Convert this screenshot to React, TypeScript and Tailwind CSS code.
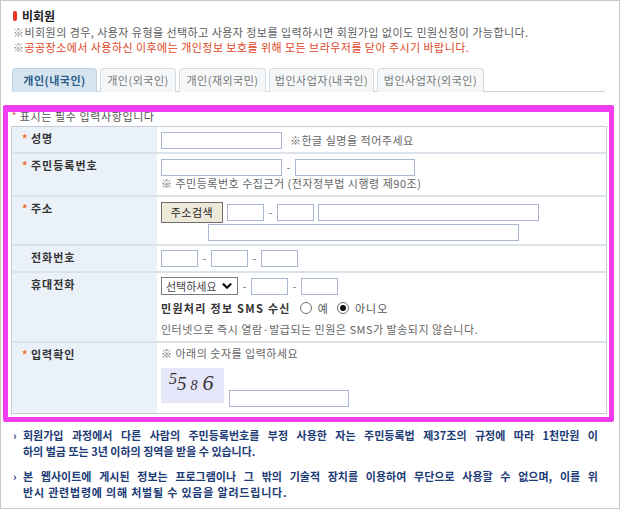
import { ChevronDown } from "lucide-react";
import type { ReactNode } from "react";

const tabs = [
  { label: "개인(내국인)", w: "w-[85px]", active: true },
  { label: "개인(외국인)", w: "w-[76px]" },
  { label: "개인(재외국민)", w: "w-[87px]" },
  { label: "법인사업자(내국인)", w: "w-[105px]" },
  { label: "법인사업자(외국인)", w: "w-[107px]" },
];

const Field = ({ w }: { w: string }) => (
  <input type="text" className={`${w} h-[17px] shrink-0 border border-[#a8b7cf] bg-white outline-none`} />
);

const Dash = () => <span className="w-[13px] shrink-0 text-center text-[11px] text-[#777]">-</span>;

function Row({ label, req, h, last, children }: { label: string; req?: boolean; h: string; last?: boolean; children: ReactNode }) {
  return (
    <div className={`flex ${h} ${last ? "" : "border-b-2 border-[#dce2e9]"}`}>
      <div className="flex w-[145px] shrink-0 items-start bg-[#eaf1f8] pl-[10px] pt-[4px] text-[11px] leading-[15px] font-bold text-[#333]">
        <span className={`w-[9px] text-[#f0702e] ${req ? "" : "invisible"}`}>*</span>
        <span className="tracking-[1px]">{label}</span>
      </div>
      <div className="flex-1 pl-[4px]">{children}</div>
    </div>
  );
}

function Radio({ on }: { on?: boolean }) {
  return (
    <span className="flex h-[12px] w-[12px] items-center justify-center rounded-full border border-[#707070] bg-white">
      {on && <span className="h-[6px] w-[6px] rounded-full bg-[#111]" />}
    </span>
  );
}

export default function App() {
  return (
    <div className="h-[509px] w-[620px] overflow-hidden border border-[#c8c8c8] bg-white font-['Noto_Sans_CJK_KR','Noto_Sans',sans-serif] text-[11px]">
      <div className="pl-[12px] pt-[7px]">
        <div className="flex items-center gap-[5px] leading-[16px]">
          <span className="h-[10px] w-[4px] rounded-full bg-[#e8331e]" />
          <span className="text-[12px] font-bold text-[#222]">비회원</span>
        </div>
        <p className="mt-[1px] leading-[15px] tracking-[0.45px] text-[#5c5c5c]">
          <span className="text-[#888]">※</span>비회원의 경우, 사용자 유형을 선택하고 사용자 정보를 입력하시면 회원가입 없이도 민원신청이 가능합니다.
        </p>
        <p className="leading-[15px] tracking-[0.45px] text-[#e0461f]">
          <span className="text-[#888]">※</span>공공장소에서 사용하신 이후에는 개인정보 보호를 위해 모든 브라우저를 닫아 주시기 바랍니다.
        </p>
      </div>

      <div className="ml-[11px] mr-[14px] mt-[13px] flex gap-[3px] border-b border-[#c9d4dd]">
        {tabs.map((t) => (
          <div
            key={t.label}
            className={`${t.w} -mb-px flex h-[24px] items-center justify-center rounded-t-[4px] border border-b-0 tracking-[0.5px] ${
              t.active ? "border-[#c3d3df] bg-[#d5e4ee] font-bold text-[#2c5f8e]" : "border-[#d3dbe2] bg-[#f5f7f9] text-[#777]"
            }`}
          >
            {t.label}
          </div>
        ))}
      </div>

      <div className="ml-[2px] mr-[5px] mt-[13px] overflow-hidden rounded-[2px] border-[5px] border-t-[7px] border-[#f03df0] pb-[3px] pl-[3px] pr-[2px]">
        <p className="mt-[-3px] flex items-center gap-[3px] pl-[1px] leading-[14px] tracking-[0.6px] text-[#555]">
          <span className="text-[9px] text-[#e33]">*</span>표시는 필수 입력사항입니다
        </p>
        <div className="mt-[3px] border border-[#c5ced7]">
          <Row label="성명" req h="h-[27px]">
            <div className="flex items-center pt-[5px]">
              <Field w="w-[121px]" />
              <span className="ml-[8px] tracking-[0.5px] text-[#666]">※한글 실명을 적어주세요</span>
            </div>
          </Row>
          <Row label="주민등록번호" req h="h-[43px]">
            <div className="flex items-center pt-[5px]">
              <Field w="w-[121px]" />
              <Dash />
              <Field w="w-[120px]" />
            </div>
            <p className="leading-[14px] tracking-[0.5px] text-[#666]">※ 주민등록번호 수집근거 (전자정부법 시행령 제90조)</p>
          </Row>
          <Row label="주소" req h="h-[49px]">
            <div className="flex items-center gap-[4px] pt-[5px]">
              <button className="h-[21px] w-[62px] border border-[#6d6d6d] bg-[#ece9d8] text-[11px] tracking-[0.5px] text-[#222]">주소검색</button>
              <Field w="w-[37px]" />
              <span className="w-[5px] text-center text-[#777]">-</span>
              <Field w="w-[37px]" />
              <Field w="w-[221px]" />
            </div>
            <div className="ml-[47px] mt-[1px]">
              <Field w="w-[311px]" />
            </div>
          </Row>
          <Row label="전화번호" h="h-[27px]">
            <div className="flex items-center pt-[4px]">
              <Field w="w-[37px]" />
              <Dash />
              <Field w="w-[37px]" />
              <Dash />
              <Field w="w-[37px]" />
            </div>
          </Row>
          <Row label="휴대전화" h="h-[70px]">
            <div className="flex items-center pt-[4px]">
              <div className="flex h-[18px] w-[77px] items-center justify-between border border-[#7c7c7c] bg-white pl-[4px] pr-[3px] text-[#444]">
                선택하세요
                <ChevronDown size={14} strokeWidth={4} className="text-[#111]" />
              </div>
              <Dash />
              <Field w="w-[37px]" />
              <Dash />
              <Field w="w-[37px]" />
            </div>
            <div className="mt-[5px] flex items-center leading-[16px]">
              <span className="font-bold tracking-[1.3px] text-[#333]">민원처리 정보 SMS 수신</span>
              <span className="ml-[9px]"><Radio /></span>
              <span className="ml-[6px] text-[#555]">예</span>
              <span className="ml-[9px]"><Radio on /></span>
              <span className="ml-[6px] tracking-[1px] text-[#555]">아니오</span>
            </div>
            <p className="mt-[6px] leading-[14px] tracking-[0.5px] text-[#666]">인터넷으로 즉시 열람·발급되는 민원은 SMS가 발송되지 않습니다.</p>
          </Row>
          <Row label="입력확인" req h="h-[70px]" last>
            <p className="pt-[3px] leading-[15px] tracking-[0.5px] text-[#666]">※ 아래의 숫자를 입력하세요</p>
            <div className="mt-[7px] flex items-start gap-[5px]">
              <div className="flex h-[35px] w-[63px] items-start bg-[#e6e6fa] pl-[8px] pt-[3px] font-['Liberation_Serif',serif] italic text-[#333]">
                <span className="text-[16px] leading-[16px]">5</span>
                <span className="mt-[3px] text-[19px] leading-[19px]">5</span>
                <span className="ml-[4px] mt-[8px] text-[14px] leading-[14px]">8</span>
                <span className="ml-[5px] mt-[1px] text-[22px] leading-[22px]">6</span>
              </div>
              <input type="text" className="mt-[22px] h-[17px] w-[120px] border border-[#a8b7cf] bg-white outline-none" />
            </div>
          </Row>
        </div>
      </div>

      <div className="mt-[5px] pl-[12px] pr-[21px] font-bold text-[#1d3b76]">
        <div className="flex">
          <span className="w-[10px] shrink-0 leading-[16px]">›</span>
          <div className="flex-1 leading-[16px]">
            <p className="text-justify [text-align-last:justify]">회원가입 과정에서 다른 사람의 주민등록번호를 부정 사용한 자는 주민등록법 제37조의 규정에 따라 1천만원 이</p>
            <p className="tracking-[0px]">하의 벌금 또는 3년 이하의 징역을 받을 수 있습니다.</p>
          </div>
        </div>
        <div className="mt-[9px] flex">
          <span className="w-[10px] shrink-0 leading-[16px]">›</span>
          <div className="flex-1 leading-[16px]">
            <p className="text-justify [text-align-last:justify]">본 웹사이트에 게시된 정보는 프로그램이나 그 밖의 기술적 장치를 이용하여 무단으로 사용할 수 없으며, 이를 위</p>
            <p className="tracking-[0.8px]">반시 관련법령에 의해 처벌될 수 있음을 알려드립니다.</p>
          </div>
        </div>
      </div>
    </div>
  );
}
